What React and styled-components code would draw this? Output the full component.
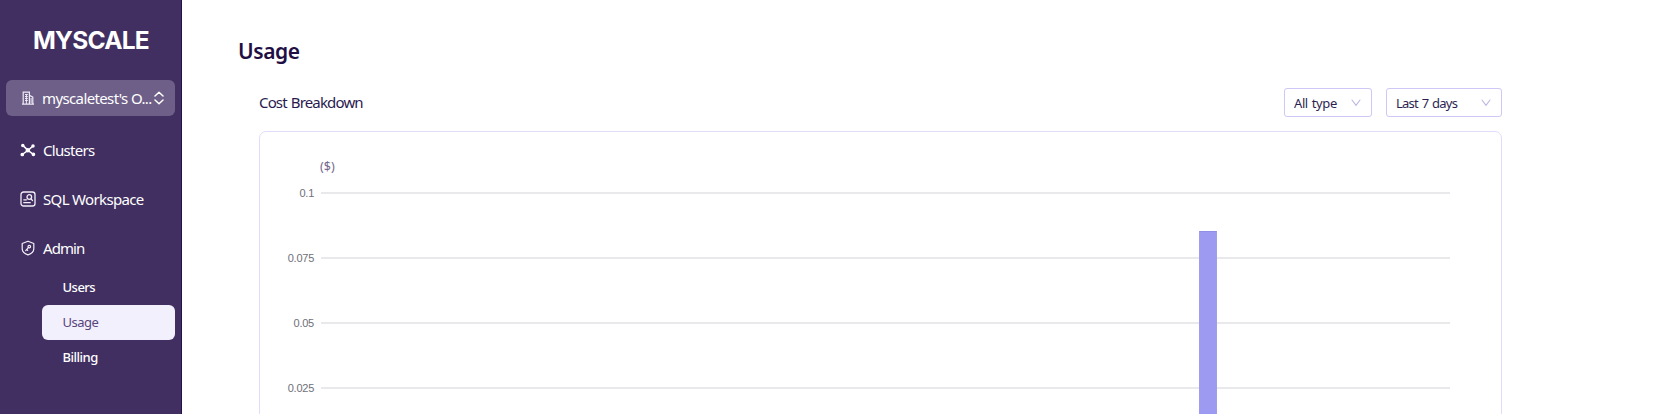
import React from 'react';
import styled, { createGlobalStyle } from 'styled-components';

const GlobalStyle = createGlobalStyle`
  * { box-sizing: border-box; }
  body { margin: 0; background: #fff; overflow: hidden; font-family: "Noto Sans", "Open Sans", sans-serif; color: #1f0f45; }
  h1, p { margin: 0; }
`;

const Page = styled.div`
  display: flex;
  height: 414px;
  overflow: hidden;
`;

const Sidebar = styled.aside`
  flex: none;
  width: 182px;
  height: 414px;
  padding: 26px 6px 0;
  background: #412f61;
  border-right: 1px solid #24104a;
`;

const Logo = styled.div`
  height: 28px;
  margin-left: 27px;
  line-height: 28px;
  font-family: Inter, sans-serif;
  font-weight: 700;
  font-size: 24.5px;
  letter-spacing: -0.75px;
  color: #fff;
  white-space: nowrap;
`;

const OrgButton = styled.div`
  display: flex;
  align-items: center;
  width: 169px;
  height: 36px;
  margin-top: 26px;
  padding: 0 11px 0 15px;
  border-radius: 6px;
  background: #6e5f88;
  color: #fff;
  svg { flex: none; }
`;

const OrgName = styled.span`
  flex: 1;
  margin-left: 7px;
  padding-bottom: 1px;
  font-size: 15px;
  letter-spacing: -0.62px;
  white-space: nowrap;
`;

const Nav = styled.nav`
  display: flex;
  flex-direction: column;
  margin-top: 9px;
`;

const NavItem = styled.div`
  display: flex;
  align-items: center;
  gap: 7px;
  height: 49px;
  padding-left: 14px;
  color: #fff;
  font-size: 15px;
  letter-spacing: ${(p) => p.$spacing || '-0.7px'};
  white-space: nowrap;
`;

const SubNav = styled.div`
  display: flex;
  flex-direction: column;
  margin: -1px 0 0 36px;
`;

const SubItem = styled.div`
  height: ${(p) => (p.$active ? 35 : 34)}px;
  line-height: ${(p) => p.$line || 34}px;
  padding-left: 20.5px;
  border-radius: 6px;
  width: 133px;
  font-size: 13px;
  font-weight: ${(p) => (p.$active ? 400 : 500)};
  letter-spacing: ${(p) => p.$spacing || '-0.5px'};
  color: ${(p) => (p.$active ? '#57457a' : '#fff')};
  background: ${(p) => (p.$active ? '#f3f0fe' : 'transparent')};
`;

const Main = styled.main`
  width: 1320px;
  padding: 35px 0 0 57px;
`;

const Title = styled.h1`
  height: 32px;
  margin-left: -1px;
  line-height: 32px;
  font-size: 21px;
  font-weight: 600;
  letter-spacing: -0.4px;
`;

const Section = styled.section`
  margin: 21px 0 0 20px;
`;

const Toolbar = styled.div`
  display: flex;
  align-items: center;
  height: 29px;
  gap: 14px;
`;

const Caption = styled.p`
  flex: 1;
  padding-bottom: 1px;
  font-size: 15px;
  font-weight: 400;
  letter-spacing: -0.85px;
  word-spacing: 1px;
  color: #2a1a50;
`;

const Select = styled.div`
  display: flex;
  align-items: center;
  justify-content: space-between;
  width: ${(p) => p.$width}px;
  height: 29px;
  padding: 0 10px 0 9px;
  border: 1px solid #cdc8f5;
  border-radius: 3px;
  font-size: 13px;
  letter-spacing: ${(p) => p.$spacing};
  word-spacing: 1px;
  color: #2e1f52;
  white-space: nowrap;
`;

const Card = styled.div`
  height: 340px;
  margin-top: 14px;
  padding: 24px 51px 0 25px;
  border: 1.5px solid #e0ddfb;
  border-radius: 7px;
`;

const Unit = styled.div`
  height: 20px;
  line-height: 21px;
  padding-left: 35px;
  font-size: 12.5px;
  color: #74698b;
`;

const Plot = styled.div`
  position: relative;
  margin-top: 5px;
`;

const GridRow = styled.div`
  display: flex;
  align-items: center;
  height: 24px;
  margin-bottom: 40.9px;
`;

const Tick = styled.span`
  width: 29px;
  margin-right: 7px;
  text-align: right;
  font-family: "Liberation Sans", sans-serif;
  font-size: 11px;
  letter-spacing: -0.25px;
  color: #6e7079;
`;

const Line = styled.i`
  flex: 1;
  height: 2px;
  background: #e9e9eb;
`;

const Bar = styled.div`
  position: absolute;
  left: 914px;
  top: 50px;
  width: 18px;
  height: 240px;
  background: #9d9af1;
  border: 1px solid #a19ded;
  border-top-color: #918ee8;
`;

const Building = () => (
  <svg width="14" height="14" viewBox="0 0 14 14" fill="none" stroke="#eeeaf6" strokeWidth="1.2">
    <path d="M1 13.2h12M2.2 13V1.2h6.2V13M8.4 4.3l3.4 1.8V13" />
    <path d="M4 3.5h2.8M4 5.5h2.8M4 7.5h2.8M4 9.5h2.8M5.4 3v10M10.1 7v5" strokeWidth="1" />
  </svg>
);

const Sorter = () => (
  <svg width="10" height="14" viewBox="0 0 10 14" fill="none" stroke="#fff" strokeWidth="1.5" strokeLinecap="round" strokeLinejoin="round">
    <path d="M1 5l4-3.7L9 5M1 9l4 3.7L9 9" />
  </svg>
);

const ClusterIcon = () => (
  <svg width="16" height="16" viewBox="0 0 16 16" fill="#fff" stroke="#fff" strokeWidth="1.5" strokeLinecap="round">
    <path d="M2.8 3.4L8 8.4M13 4L8 8.4M2.2 12.5L8 8.4M13.3 12.3L8 8.4" fill="none" />
    <circle cx="2.8" cy="3.4" r="1" />
    <circle cx="13" cy="4" r="1" />
    <circle cx="2.3" cy="12.5" r="1.1" />
    <circle cx="13.4" cy="12.3" r="1.1" />
    <circle cx="7.8" cy="8.3" r="1.5" />
  </svg>
);

const SqlIcon = () => (
  <svg width="16" height="16" viewBox="0 0 16 16" fill="none" stroke="#f2eff8" strokeWidth="1.3" strokeLinecap="round">
    <rect x="1" y="1" width="14" height="14" rx="2.6" />
    <circle cx="9.3" cy="6" r="2.3" />
    <path d="M11 7.9l1.5 1.6M3.8 8.8h2.6M3.8 11.7h6.4" />
  </svg>
);

const ShieldIcon = () => (
  <svg width="16" height="16" viewBox="0 0 16 16" fill="none" stroke="#f2eff8" strokeWidth="1.2" strokeLinecap="round" strokeLinejoin="round">
    <path d="M8 1.2l5.8 2.3v5.2c0 3-2.6 5-5.8 6.2-3.2-1.2-5.8-3.2-5.8-6.2V3.5z" />
    <circle cx="9.3" cy="6.6" r="1.3" />
    <path d="M8.3 7.7L5.7 10.6M6.7 9.5l1 .9" />
  </svg>
);

const Chevron = () => (
  <svg width="10" height="8" viewBox="0 0 10 8" fill="none" stroke="#bdb8e4" strokeWidth="1.1" strokeLinecap="round" strokeLinejoin="round">
    <path d="M1 1l4 5.4L9 1" />
  </svg>
);

export default function App() {
  return (
    <>
      <GlobalStyle />
      <Page>
        <Sidebar>
          <Logo>MYSCALE</Logo>
          <OrgButton>
            <Building />
            <OrgName>myscaletest's O...</OrgName>
            <Sorter />
          </OrgButton>
          <Nav>
            <NavItem><ClusterIcon />Clusters</NavItem>
            <NavItem $spacing="-0.65px"><SqlIcon />SQL Workspace</NavItem>
            <NavItem $spacing="-0.95px"><ShieldIcon />Admin</NavItem>
          </Nav>
          <SubNav>
            <SubItem $line={33}>Users</SubItem>
            <SubItem $active $line={35}>Usage</SubItem>
            <SubItem $line={35}>Billing</SubItem>
          </SubNav>
        </Sidebar>
        <Main>
          <Title>Usage</Title>
          <Section>
            <Toolbar>
              <Caption>Cost Breakdown</Caption>
              <Select $width={88} $spacing="-0.4px">All type<Chevron /></Select>
              <Select $width={116} $spacing="-0.75px">Last 7 days<Chevron /></Select>
            </Toolbar>
            <Card>
              <Unit>($)</Unit>
              <Plot>
                {['0.1', '0.075', '0.05', '0.025'].map((t) => (
                  <GridRow key={t}><Tick>{t}</Tick><Line /></GridRow>
                ))}
                <Bar />
              </Plot>
            </Card>
          </Section>
        </Main>
      </Page>
    </>
  );
}
